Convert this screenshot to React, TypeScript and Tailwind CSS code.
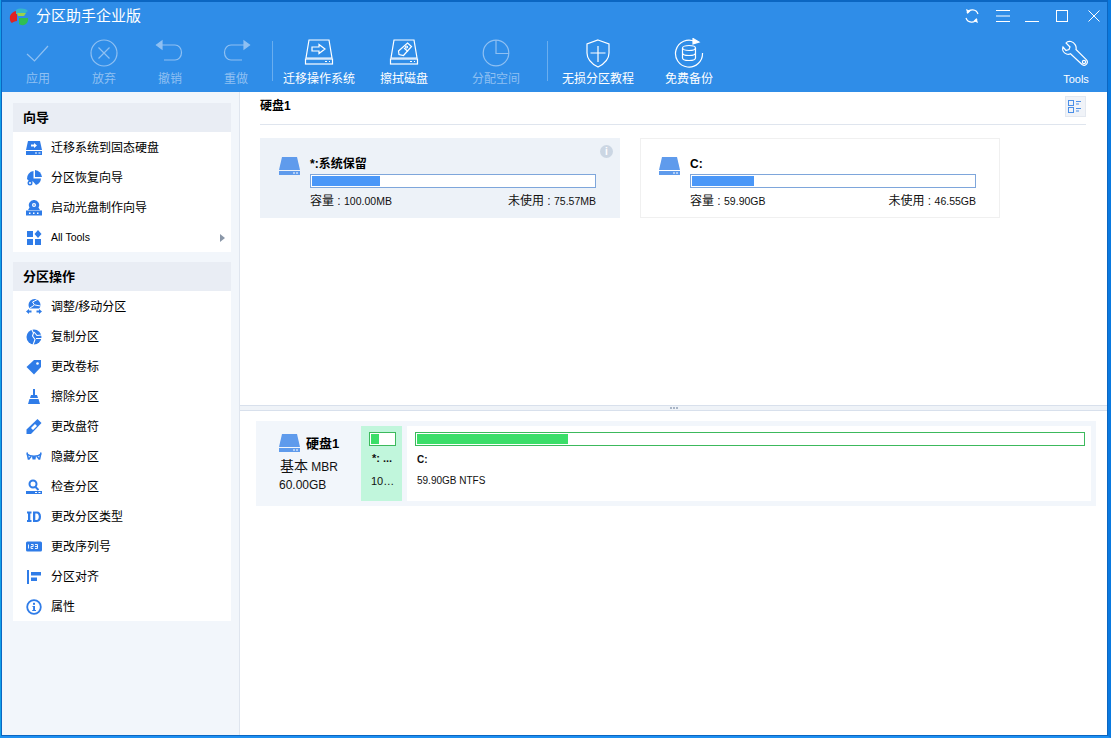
import React from "react";

const font = "font-['Liberation_Sans','Noto_Sans_CJK_SC',sans-serif]";

// 顶部工具栏图标
const ICheck = () => (
  <svg width="32" height="32" viewBox="0 0 32 32" fill="none" stroke="currentColor" strokeWidth="1.2">
    <path d="M5 17l7.5 7L26 9" />
  </svg>
);
const IX = () => (
  <svg width="30" height="30" viewBox="0 0 30 30" fill="none" stroke="currentColor" strokeWidth="1.2">
    <circle cx="15" cy="15" r="13" />
    <path d="M9.5 9.5l11 11M20.500 9.500l-11 11" />
  </svg>
);
const IUndo = () => (
  <svg width="30" height="30" viewBox="0 0 30 30" fill="none" stroke="currentColor" strokeWidth="1.2">
    <path d="M5 7h15a6.500 7.500 0 0 1 0 15H9" />
    <path d="M7 3L1.500 7 7 11z" fill="currentColor" />
  </svg>
);
const IRedo = () => (
  <svg width="30" height="30" viewBox="0 0 30 30" fill="none" stroke="currentColor" strokeWidth="1.2">
    <path d="M25 7H10a6.500 7.500 0 0 0 0 15h11" />
    <path d="M23 3l5.500 4L23 11z" fill="currentColor" />
  </svg>
);
const IDiskArrow = () => (
  <svg width="30" height="30" viewBox="0 0 30 30" fill="none" stroke="currentColor" strokeWidth="1.200">
    <path d="M5 2h20l3 18H2z" />
    <rect x="1.500" y="21" width="27" height="5" />
    <path d="M21 23.500h2M25 23.500h1" />
    <path d="M8 9h7V6.500l6 4.500-6 4.500V13H8z" />
  </svg>
);
const IDiskErase = () => (
  <svg width="30" height="30" viewBox="0 0 30 30" fill="none" stroke="currentColor" strokeWidth="1.200">
    <path d="M5 2h20l3 18H2z" />
    <rect x="1.500" y="21" width="27" height="5" />
    <path d="M21 23.500h2M25 23.500h1" />
    <path d="M18.500 5l4 3.500-8 9-4.500-1-.5-3.500z" />
    <path d="M15 10l4 3.500M17.500 8a1 1 0 1 0 .1 0" />
  </svg>
);
const IPie = () => (
  <svg width="30" height="30" viewBox="0 0 30 30" fill="none" stroke="currentColor" strokeWidth="1.2">
    <circle cx="15" cy="15" r="12.800" />
    <path d="M15 2v13.500h13" />
  </svg>
);
const IShield = () => (
  <svg width="30" height="30" viewBox="0 0 30 30" fill="none" stroke="currentColor" strokeWidth="1.200">
    <path d="M15 2l11 4v9c0 7-5 11-11 14C9 26 4 22 4 15V6z" />
    <path d="M15 8v16M7.500 15h15" />
  </svg>
);
const IBackup = () => (
  <svg width="30" height="30" viewBox="0 0 30 30" fill="none" stroke="currentColor" strokeWidth="1.200">
    <path d="M21 3.500A13.500 13.500 0 1 0 28.500 15" />
    <path d="M19 0.500l6 3.500-6 2z" fill="currentColor" />
    <ellipse cx="15" cy="10" rx="6.500" ry="2.500" />
    <path d="M8.500 10v10c0 1.500 3 2.500 6.500 2.500s6.500-1 6.500-2.500V10M8.500 15c0 1.500 3 2.500 6.500 2.500s6.500-1 6.500-2.500" />
  </svg>
);
const ITools = () => (
  <svg width="28" height="28" viewBox="0 0 28 28" fill="none" stroke="currentColor" strokeWidth="1.200">
    <path d="M9 2.500c-2-.5-4 .2-5 1.500l4 4-1 2.500-3 1L1 8c-1 3 .5 6 3.500 7 1.500.500 3 .3 4-.2L20 25.500c1.500 1 3.500 1 4.500-.3s1-3.300-.2-4.500L14 10.500c.8-3.500-1.500-7-5-8z" />
    <circle cx="22" cy="23" r="1.600" />
  </svg>
);

// 硬盘图标（实心）
const DiskSolid = () => (
  <svg width="21" height="18" viewBox="0 0 21 18">
    <path d="M3 0h15l3 13H0z" fill="#5f9bec" />
    <rect x="0" y="14" width="21" height="4" fill="#5f9bec" />
    <rect x="14" y="15.500" width="2" height="1" fill="#fff" />
    <rect x="17" y="15.500" width="2" height="1" fill="#fff" />
  </svg>
);

// 侧栏图标
const blue = "#2f7ce8";
const side: Record<string, React.ReactNode> = {
  migrate: (
    <svg width="16" height="16" viewBox="0 0 16 16">
      <path d="M2 1h12l2 9H0z" fill={blue} />
      <rect y="11" width="16" height="4" fill={blue} />
      <path d="M5 4.500h3V3l3 2.500L8 8V6.500H5z" fill="#fff" />
      <path d="M9 12.500h2v1H9zM12.500 12.500h2v1h-2z" fill="#fff" />
    </svg>
  ),
  recover: (
    <svg width="16" height="16" viewBox="0 0 16 16" fill={blue}>
      <path d="M9 0a7.500 7.500 0 0 1 7 7H9z" />
      <path d="M7.500 1v7.500H15a7.500 7.500 0 0 1-5 6.500L7 11.500 4 12 1 9A7.500 7.500 0 0 1 7.500 1z" />
      <circle cx="4" cy="13" r="2.500" />
      <circle cx="4" cy="13" r="1" fill="#fff" />
    </svg>
  ),
  boot: (
    <svg width="16" height="16" viewBox="0 0 16 16">
      <path d="M8 0a5 5 0 0 1 4.500 7.500L14 10H2l1.500-2.500A5 5 0 0 1 8 0z" fill={blue} />
      <circle cx="8" cy="5" r="2" fill="#fff" />
      <circle cx="8" cy="5" r="0.800" fill={blue} />
      <rect y="10.500" width="16" height="5" fill={blue} />
      <path d="M3 12.500h1.500v1.500H3zM7 12.500h1.500v1.500H7zM11 12.500h1.500v1.500H11z" fill="#fff" />
    </svg>
  ),
  all: (
    <svg width="16" height="16" viewBox="0 0 16 16" fill={blue}>
      <rect x="1" y="1" width="6" height="6" />
      <path d="M12 0l3.500 4L12 8 8.500 4z" />
      <rect x="1" y="9" width="6" height="6" />
      <rect x="9" y="9" width="6" height="6" />
    </svg>
  ),
  resize: (
    <svg width="16" height="16" viewBox="0 0 16 16">
      <circle cx="8.500" cy="6" r="6" fill={blue} />
      <path d="M4 9l4.500-3-2-3 5-2.500M9 6l5.500 1" fill="none" stroke="#fff" strokeWidth="1" />
      <rect x="2" y="9.500" width="12" height="6" fill="#fff" />
      <path d="M0 12.500l3-2.500v1.500h2.500v2H3V15zM16 12.500L13 10v1.500h-2.500v2H13V15z" fill={blue} />
    </svg>
  ),
  copy: (
    <svg width="16" height="16" viewBox="0 0 16 16">
      <circle cx="8" cy="8" r="7.500" fill={blue} />
      <path d="M5.500 0l2 4-1 3 2.500 3.500L7 16M8 3l3 3.500 5-.5M10 9.500h6" fill="none" stroke="#fff" strokeWidth="1.100" />
    </svg>
  ),
  label: (
    <svg width="16" height="16" viewBox="0 0 16 16">
      <path d="M8 1h7v7l-7 7.500L0.500 8z" fill={blue} />
      <circle cx="11.500" cy="4.500" r="1.300" fill="#fff" />
    </svg>
  ),
  wipe: (
    <svg width="16" height="16" viewBox="0 0 16 16" fill={blue}>
      <rect x="7" y="0" width="2" height="6" />
      <path d="M5 6h6l1 3H4z" />
      <path d="M3.500 10h9l1.500 5H2z" />
    </svg>
  ),
  letter: (
    <svg width="16" height="16" viewBox="0 0 16 16">
      <path d="M11.500 0l4 4L5 15H0.500v-4.500z" fill={blue} />
      <path d="M9 5l2 2-4 4-2-2z" fill="#fff" />
    </svg>
  ),
  hide: (
    <svg width="16" height="16" viewBox="0 0 16 16" fill="none" stroke={blue} strokeWidth="1.500">
      <path d="M1 5c3 3 11 3 14 0" />
      <path d="M1 3.500l1.500 7M15 3.500l-1.500 7" />
      <path d="M6 7.500h4l-.5 3h-3z" fill={blue} stroke="none" />
      <path d="M2.500 10.500L5 7.500M13.500 10.500L11 7.500" />
    </svg>
  ),
  check: (
    <svg width="16" height="16" viewBox="0 0 16 16">
      <circle cx="7" cy="5" r="3.500" fill="none" stroke={blue} strokeWidth="2" />
      <path d="M9.500 8l3 3" stroke={blue} strokeWidth="2" />
      <rect y="12" width="16" height="3" fill={blue} />
      <path d="M9 13h2v1H9zM12.500 13h2v1h-2z" fill="#fff" />
    </svg>
  ),
  id: (
    <svg width="16" height="16" viewBox="0 0 16 16" fill={blue}>
      <path d="M1 2.500h4.500v2H4.300v6.500h1.200v2H1v-2h1V4.500H1z" />
      <path fillRule="evenodd" d="M7 2.500h4c2.500 0 4 2 4 5.300s-1.500 5.200-4 5.200H7zM9.300 4.500v6.500h1.500c1.200 0 2-1.200 2-3.200s-.8-3.300-2-3.300z" />
    </svg>
  ),
  serial: (
    <svg width="16" height="16" viewBox="0 0 16 16">
      <rect y="2.500" width="16" height="10" rx="1.500" fill={blue} />
      <path d="M2.500 5.500v4M5 5.500h2.200v2H5v2h2.200M9 5.500h2.500v4H9M9 7.500h2.500" fill="none" stroke="#fff" strokeWidth="0.900" />
    </svg>
  ),
  align: (
    <svg width="16" height="16" viewBox="0 0 16 16" fill={blue}>
      <rect x="1" y="1" width="2" height="14" />
      <rect x="5" y="3" width="10" height="3.500" />
      <rect x="5" y="8.500" width="6" height="3.500" />
    </svg>
  ),
  info: (
    <svg width="16" height="16" viewBox="0 0 16 16">
      <circle cx="8" cy="8" r="6.800" fill="none" stroke={blue} strokeWidth="1.800" />
      <rect x="7" y="3.800" width="2" height="2" fill={blue} />
      <path d="M6.500 7H9v4h1v1H6.200v-1h.9V8h-.6z" fill={blue} />
    </svg>
  ),
};

const tools = [
  { label: "应用", icon: <ICheck /> },
  { label: "放弃", icon: <IX /> },
  { label: "撤销", icon: <IUndo /> },
  { label: "重做", icon: <IRedo /> },
];

const Tool = ({ label, icon, off, cls, small }: { label: string; icon: React.ReactNode; off?: boolean; cls: string; small?: boolean }) => (
  <div className={`flex flex-col items-center shrink-0 ${cls} ${off ? "text-[#8fc0f2]" : "text-white"}`}>
    <div className="h-[30px] flex items-center justify-center">{icon}</div>
    <span className={`mt-[3px] leading-[16px] whitespace-nowrap ${small ? "text-[11px]" : "text-[12px]"}`}>{label}</span>
  </div>
);

const Divider = () => <div className="w-px h-[40px] bg-[#6aaeef] mt-[3px] shrink-0" />;

const SideGroup = ({ title, items }: { title: string; items: [string, string][] }) => (
  <div className="bg-white">
    <div className="h-[29px] bg-[#e9edf4] pl-[10px] flex items-center text-[13px] font-bold text-black">{title}</div>
    {items.map(([key, text]) => (
      <div key={key} className="h-[30px] flex items-center pl-[13px] pt-[2px]">
        <span className="w-[16px] h-[16px] flex">{side[key]}</span>
        <span className={`ml-[9px] text-black whitespace-nowrap ${key === "all" ? "text-[10.5px]" : "text-[12px]"}`}>{text}</span>
        {key === "all" && (
          <span className="ml-auto mr-[6px] w-0 h-0 border-y-[4px] border-y-transparent border-l-[5px] border-l-[#8a97a8]" />
        )}
      </div>
    ))}
  </div>
);

const PartCard = ({
  name, capLabel, cap, free, pct, active,
}: { name: string; capLabel: string; cap: string; free: string; pct: string; active?: boolean }) => (
  <div className={`relative w-[360px] h-[80px] flex ${active ? "bg-[#edf2f8] pl-[19px] pt-[18px]" : "bg-white border border-[#f0f0f0] pl-[18px] pt-[17px]"}`}>
    {active && (
      <span className="absolute top-[7px] right-[7px] w-[13px] h-[13px] rounded-full bg-[#cbd6e3] text-white text-[10px] leading-[13px] text-center font-bold">i</span>
    )}
    <div className="pt-px"><DiskSolid /></div>
    <div className="ml-[10px] w-[286px]">
      <div className="text-[12px] leading-[16px] font-bold text-black">{name}</div>
      <div className="h-[14px] mt-[2px] border border-[#7ea6db] bg-white p-px">
        <div className="h-full bg-[#4a97f8]" style={{ width: pct }} />
      </div>
      <div className="mt-[5px] flex justify-between text-[12px] leading-[16px] text-[#111]">
        <span>{capLabel} : <span className="text-[10.5px]">{cap}</span></span>
        <span>未使用 : <span className="text-[10.5px]">{free}</span></span>
      </div>
    </div>
  </div>
);

export default function App() {
  return (
    <div className={`${font} w-[1111px] h-[738px] overflow-hidden flex flex-col border-l border-r-[3px] border-b-2 border-l-[#12a0e8] border-r-[#0a7ae0] border-b-[#1e8ff0]`}>
      <div className="flex-1 min-h-0 flex flex-col bg-white border-t-2 border-l border-r border-b border-[#0b66c2]">
        {/* 顶部 */}
        <div className="h-[90px] shrink-0 bg-[#2f8de8] flex flex-col text-white">
          <div className="h-[28px] flex items-center">
            <svg width="24" height="20" viewBox="0 0 24 20" className="ml-[6px] mt-[1px]">
              <path d="M2 9c1-3 4-5 7-5v10c-2 0-4 1-5 2-2-1-2.500-4-2-7z" fill="#e02222" />
              <path d="M8 3c3-2 9-2 12 1l-5 4c-2-1-5-1-7-1z" fill="#35b6c9" />
              <path d="M9 6h9l-2 3h-6z" fill="#9ad34a" />
              <path d="M11 11h9c.5 3-1 6-4 7-2 .500-4 0-5-1z" fill="#2fbf53" />
            </svg>
            <span className="ml-[4px] text-[15px] leading-[20px]">分区助手企业版</span>
            <div className="ml-auto flex items-center">
              <svg width="16" height="16" viewBox="0 0 16 16" fill="none" stroke="white" strokeWidth="1.200" className="mr-[16px]">
                <path d="M3 5a6 6 0 0 1 11 1M13 11a6 6 0 0 1-11-1" />
                <path d="M2 1l1.500 5 3-3zM14 15l-1.500-5-3 3z" fill="white" stroke="none" />
              </svg>
              <svg width="14" height="12" viewBox="0 0 14 12" stroke="white" strokeWidth="1" className="mr-[15px]">
                <path d="M0 .5h14M0 6h14M0 11.500h14" />
              </svg>
              <svg width="14" height="12" viewBox="0 0 14 12" stroke="white" strokeWidth="1" className="mr-[17px]">
                <path d="M0 11.500h14" />
              </svg>
              <span className="w-[12px] h-[12px] border border-white mr-[20px]" />
              <svg width="12" height="12" viewBox="0 0 12 12" stroke="white" strokeWidth="1" className="mr-[7px]">
                <path d="M.5.5l11 11M11.500.5l-11 11" />
              </svg>
            </div>
          </div>
          <div className="flex items-start pt-[8px]">
            <div className="w-[3px] shrink-0" />
            {tools.map((t) => (
              <Tool key={t.label} label={t.label} icon={t.icon} off cls="w-[66px]" />
            ))}
            <div className="w-[3px] shrink-0" />
            <Divider />
            <Tool label="迁移操作系统" icon={<IDiskArrow />} cls="w-[92px]" />
            <Tool label="擦拭磁盘" icon={<IDiskErase />} cls="w-[60px] ml-[9px]" />
            <Tool label="分配空间" icon={<IPie />} off cls="w-[60px] ml-[32px]" />
            <div className="w-[21px] shrink-0" />
            <Divider />
            <Tool label="无损分区教程" icon={<IShield />} cls="w-[84px] ml-[8px]" />
            <Tool label="免费备份" icon={<IBackup />} cls="w-[60px] ml-[19px]" />
            <Tool label="Tools" icon={<ITools />} small cls="ml-auto mr-[11px] w-[40px]" />
          </div>
        </div>

        <div className="flex-1 flex min-h-0">
          {/* 侧栏 */}
          <aside className="w-[238px] shrink-0 bg-[#f2f6fb] border-r border-[#dfe5ee] pl-[11px] pr-[8px] pt-[11px] flex flex-col gap-[10px]">
            <SideGroup
              title="向导"
              items={[
                ["migrate", "迁移系统到固态硬盘"],
                ["recover", "分区恢复向导"],
                ["boot", "启动光盘制作向导"],
                ["all", "All Tools"],
              ]}
            />
            <SideGroup
              title="分区操作"
              items={[
                ["resize", "调整/移动分区"],
                ["copy", "复制分区"],
                ["label", "更改卷标"],
                ["wipe", "擦除分区"],
                ["letter", "更改盘符"],
                ["hide", "隐藏分区"],
                ["check", "检查分区"],
                ["id", "更改分区类型"],
                ["serial", "更改序列号"],
                ["align", "分区对齐"],
                ["info", "属性"],
              ]}
            />
          </aside>

          {/* 主区域 */}
          <main className="flex-1 min-w-0 flex flex-col">
            <section className="h-[313px] shrink-0 pl-[20px] pr-[21px] relative">
              <div className="h-[33px] border-b border-[#dfe5ee] flex items-start pt-[5px] text-[12px] font-bold text-black leading-[18px]">硬盘1</div>
              <span className="absolute top-[4px] right-[21px] w-[21px] h-[21px] bg-[#f0f3f8] border border-[#e3e8f0] flex items-center justify-center">
                <svg width="15" height="15" viewBox="0 0 15 15" fill="none" stroke="#4a8fe8" strokeWidth="1">
                  <rect x=".5" y="1.500" width="5" height="5" />
                  <rect x=".5" y="8.500" width="5" height="5" />
                  <path d="M8 2.500h5M8 5h3M8 9.500h5M8 12h3" />
                </svg>
              </span>
              <div className="flex gap-[20px] mt-[13px]">
                <PartCard name="*:系统保留" capLabel="容量" cap="100.00MB" free="75.57MB" pct="24%" active />
                <PartCard name="C:" capLabel="容量" cap="59.90GB" free="46.55GB" pct="22%" />
              </div>
            </section>

            {/* 分隔条 */}
            <div className="h-[6px] shrink-0 bg-[#eff3f8] border-y border-[#d8e0ec] flex items-center justify-center gap-px">
              <span className="w-[2px] h-[2px] bg-[#a9b5c6]" />
              <span className="w-[2px] h-[2px] bg-[#a9b5c6]" />
              <span className="w-[2px] h-[2px] bg-[#a9b5c6]" />
            </div>

            <section className="flex-1 pt-[10px] pl-[16px] pr-[11px]">
              <div className="h-[85px] bg-[#f2f6fb] flex py-[5px] pr-[5px]">
                <div className="w-[105px] shrink-0 pl-[23px] pt-[7px] text-[12px] text-[#111]">
                  <div className="flex items-end h-[19px]">
                    <DiskSolid />
                    <span className="ml-[6px] text-[13px] font-bold leading-[16px] text-black whitespace-nowrap">硬盘1</span>
                  </div>
                  <div className="leading-[18px] mt-[5px] ml-px whitespace-nowrap"><span className="text-[14px]">基本</span> MBR</div>
                  <div className="leading-[18px] whitespace-nowrap">60.00GB</div>
                </div>
                <div className="w-[41px] shrink-0 bg-[#c1f6dc] pl-[8px] pr-[6px] pt-[6px] text-[#111]">
                  <div className="h-[14px] border border-[#3cb95c] bg-white p-px">
                    <div className="h-full w-[8px] bg-[#3ade68]" />
                  </div>
                  <div className="text-[11px] font-bold leading-[14px] mt-[5px] ml-[3px] whitespace-nowrap">*: ...</div>
                  <div className="text-[11px] leading-[14px] mt-[9px] ml-[2px] whitespace-nowrap">10…</div>
                </div>
                <div className="flex-1 min-w-0 ml-[5px] bg-white pl-[8px] pr-[6px] pt-[6px] text-[10px] text-[#111]">
                  <div className="h-[14px] border border-[#3cb95c] bg-white p-px">
                    <div className="h-full bg-[#3ade68]" style={{ width: "22.700%" }} />
                  </div>
                  <div className="font-bold leading-[14px] mt-[7px] ml-[2px]">C:</div>
                  <div className="leading-[14px] mt-[7px] ml-[2px]">59.90GB NTFS</div>
                </div>
              </div>
            </section>
          </main>
        </div>
      </div>
    </div>
  );
}
